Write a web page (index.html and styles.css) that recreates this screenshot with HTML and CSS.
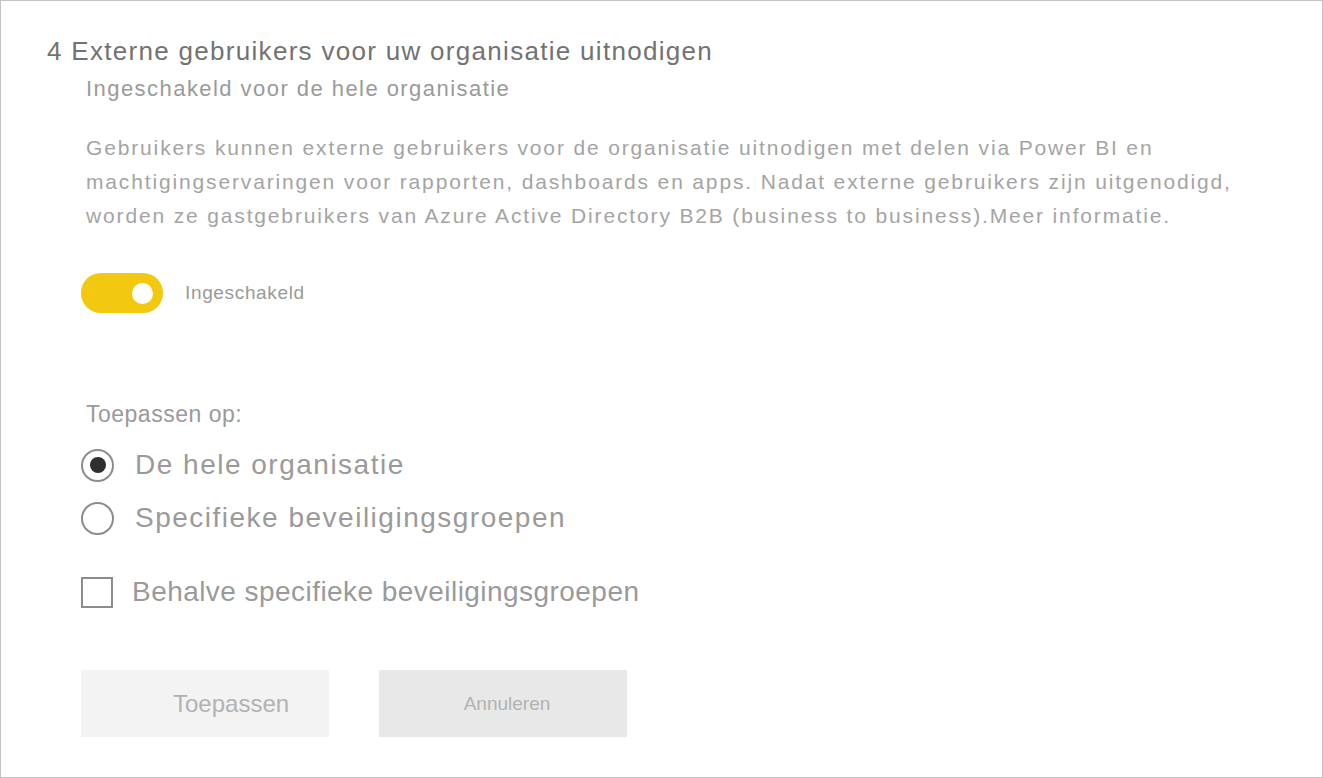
FILE: index.html
```html
<!DOCTYPE html>
<html lang="nl">
<head>
<meta charset="utf-8">
<link rel="stylesheet" href="styles.css">
</head>
<body>
<div class="frame">
  <h1 class="title">4 Externe gebruikers voor uw organisatie uitnodigen</h1>
  <div class="content">
    <div class="subtitle">Ingeschakeld voor de hele organisatie</div>
    <p class="desc">Gebruikers kunnen externe gebruikers voor de organisatie uitnodigen met delen via Power BI en machtigingservaringen voor rapporten, dashboards en apps. Nadat externe gebruikers zijn uitgenodigd, worden ze gastgebruikers van Azure Active Directory B2B (business to business).Meer informatie.</p>
    <div class="toggle-row">
      <span class="toggle"><span class="knob"></span></span>
      <span class="toggle-label">Ingeschakeld</span>
    </div>
    <div class="apply-label">Toepassen op:</div>
    <div class="option radio-row">
      <span class="radio checked"><span class="dot"></span></span>
      <span class="opt-text">De hele organisatie</span>
    </div>
    <div class="option radio-row second">
      <span class="radio"></span>
      <span class="opt-text">Specifieke beveiligingsgroepen</span>
    </div>
    <div class="option check-row">
      <span class="checkbox"></span>
      <span class="opt-text">Behalve specifieke beveiligingsgroepen</span>
    </div>
    <div class="buttons">
      <button class="btn btn-apply">Toepassen</button>
      <button class="btn btn-cancel">Annuleren</button>
    </div>
  </div>
</div>
</body>
</html>
```
FILE: styles.css
```css
html, body {
  margin: 0;
  padding: 0;
  background: #ffffff;
}
body {
  font-family: "Liberation Sans", Arial, sans-serif;
}
.frame {
  box-sizing: border-box;
  width: 1323px;
  height: 778px;
  border: 1px solid #c3c3c3;
  padding: 35px 0 0 46px;
  background: #fff;
}
.title {
  margin: 0;
  font-size: 26px;
  line-height: 30px;
  font-weight: normal;
  letter-spacing: 1.3px;
  color: #727272;
}
.content {
  padding-left: 39px;
}
.subtitle {
  margin-top: 10px;
  font-size: 22px;
  line-height: 26px;
  letter-spacing: 1.45px;
  color: #9a9a9a;
}
.desc {
  margin: 29px 0 0 0;
  width: 1150px;
  font-size: 21px;
  line-height: 34px;
  letter-spacing: 1.85px;
  color: #a4a4a4;
}
.toggle-row {
  display: flex;
  align-items: center;
  height: 40px;
  margin-top: 40px;
  margin-left: -5px;
}
.toggle {
  box-sizing: border-box;
  width: 82px;
  height: 40px;
  border-radius: 20px;
  background: #f2c811;
  display: flex;
  align-items: center;
  justify-content: flex-end;
  padding-right: 10px;
}
.knob {
  width: 21px;
  height: 21px;
  border-radius: 50%;
  background: #fff;
}
.toggle-label {
  margin-left: 22px;
  font-size: 19px;
  letter-spacing: 0.65px;
  color: #9a9a9a;
}
.apply-label {
  margin-top: 87px;
  font-size: 23px;
  line-height: 28px;
  letter-spacing: 0.5px;
  color: #9a9a9a;
}
.option {
  display: flex;
  align-items: center;
  height: 40px;
  margin-left: -5px;
}
.radio-row {
  margin-top: 17px;
}
.radio-row.second {
  margin-top: 13px;
}
.check-row {
  margin-top: 34px;
}
.radio {
  box-sizing: border-box;
  width: 33px;
  height: 33px;
  border: 2px solid #8c8c8c;
  border-radius: 50%;
  display: flex;
  align-items: center;
  justify-content: center;
}
.dot {
  width: 16px;
  height: 16px;
  border-radius: 50%;
  background: #2f2f2f;
}
.checkbox {
  box-sizing: border-box;
  width: 32px;
  height: 31px;
  border: 2px solid #8c8c8c;
}
.opt-text {
  margin-left: 21px;
  font-size: 28px;
  letter-spacing: 1.5px;
  color: #9a9a9a;
}
.check-row .opt-text {
  margin-left: 19px;
  letter-spacing: 0.45px;
}
.buttons {
  display: flex;
  gap: 50px;
  margin-top: 58px;
  margin-left: -5px;
}
.btn {
  width: 248px;
  height: 67px;
  border: none;
  font-family: "Liberation Sans", Arial, sans-serif;
  color: #b2b2b2;
  padding: 0;
}
.btn-apply {
  background: #f3f3f3;
  font-size: 24px;
  text-align: left;
  padding-left: 92px;
}
.btn-cancel {
  background: #e8e8e8;
  font-size: 19px;
  padding-left: 8px;
}
```
